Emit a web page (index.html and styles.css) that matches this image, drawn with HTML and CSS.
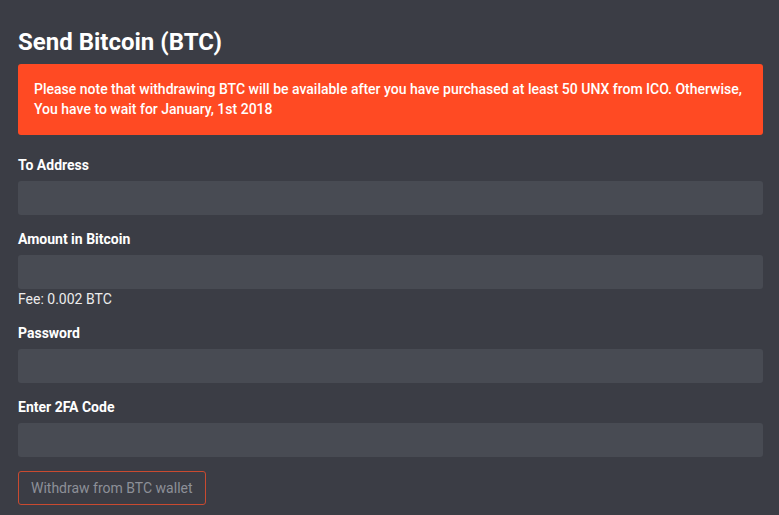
FILE: index.html
```html
<!DOCTYPE html>
<html>
<head>
<meta charset="utf-8">
<link rel="stylesheet" href="styles.css">
</head>
<body>
<div class="page">
  <h1 class="title">Send Bitcoin (BTC)</h1>
  <div class="alert">Please note that withdrawing BTC will be available after you have purchased at least 50 UNX from ICO. Otherwise, You have to wait for January, 1st 2018</div>
  <div class="group">
    <label class="label">To Address</label>
    <div class="input"></div>
  </div>
  <div class="group">
    <label class="label">Amount in Bitcoin</label>
    <div class="input"></div>
    <div class="fee">Fee: 0.002 BTC</div>
  </div>
  <div class="group">
    <label class="label">Password</label>
    <div class="input"></div>
  </div>
  <div class="group">
    <label class="label">Enter 2FA Code</label>
    <div class="input"></div>
  </div>
  <button class="btn">Withdraw from BTC wallet</button>
</div>
</body>
</html>
```
FILE: styles.css
```css
html, body {
  margin: 0;
  padding: 0;
  background: #3b3d45;
  height: 100%;
  overflow: hidden;
}
body {
  font-family: Roboto, "Liberation Sans", sans-serif;
  font-size: 14px;
  line-height: 20px;
  color: #ffffff;
}
.page {
  padding: 28px 16px 0 18px;
}
.title {
  margin: 0 0 8px;
  font-size: 24px;
  line-height: 28px;
  font-weight: 700;
  color: #ffffff;
}
.alert {
  background: #ff4a23;
  border-radius: 3px;
  padding: 15px 16px 16px;
  font-weight: 500;
  color: #ffffff;
  margin-bottom: 20px;
}
.group {
  margin-bottom: 14px;
}
.label {
  display: block;
  font-weight: 700;
  margin-bottom: 6px;
}
.input {
  height: 34px;
  background: #484b53;
  border-radius: 3px;
}
.fee {
  color: #ececec;
}
.btn {
  display: block;
  margin-top: 1px;
  height: 34px;
  padding: 0 12px;
  background: transparent;
  border: 1px solid #c94a30;
  border-radius: 3px;
  color: #8d9098;
  font-family: Roboto, "Liberation Sans", sans-serif;
  font-size: 14px;
  white-space: nowrap;
}
```
